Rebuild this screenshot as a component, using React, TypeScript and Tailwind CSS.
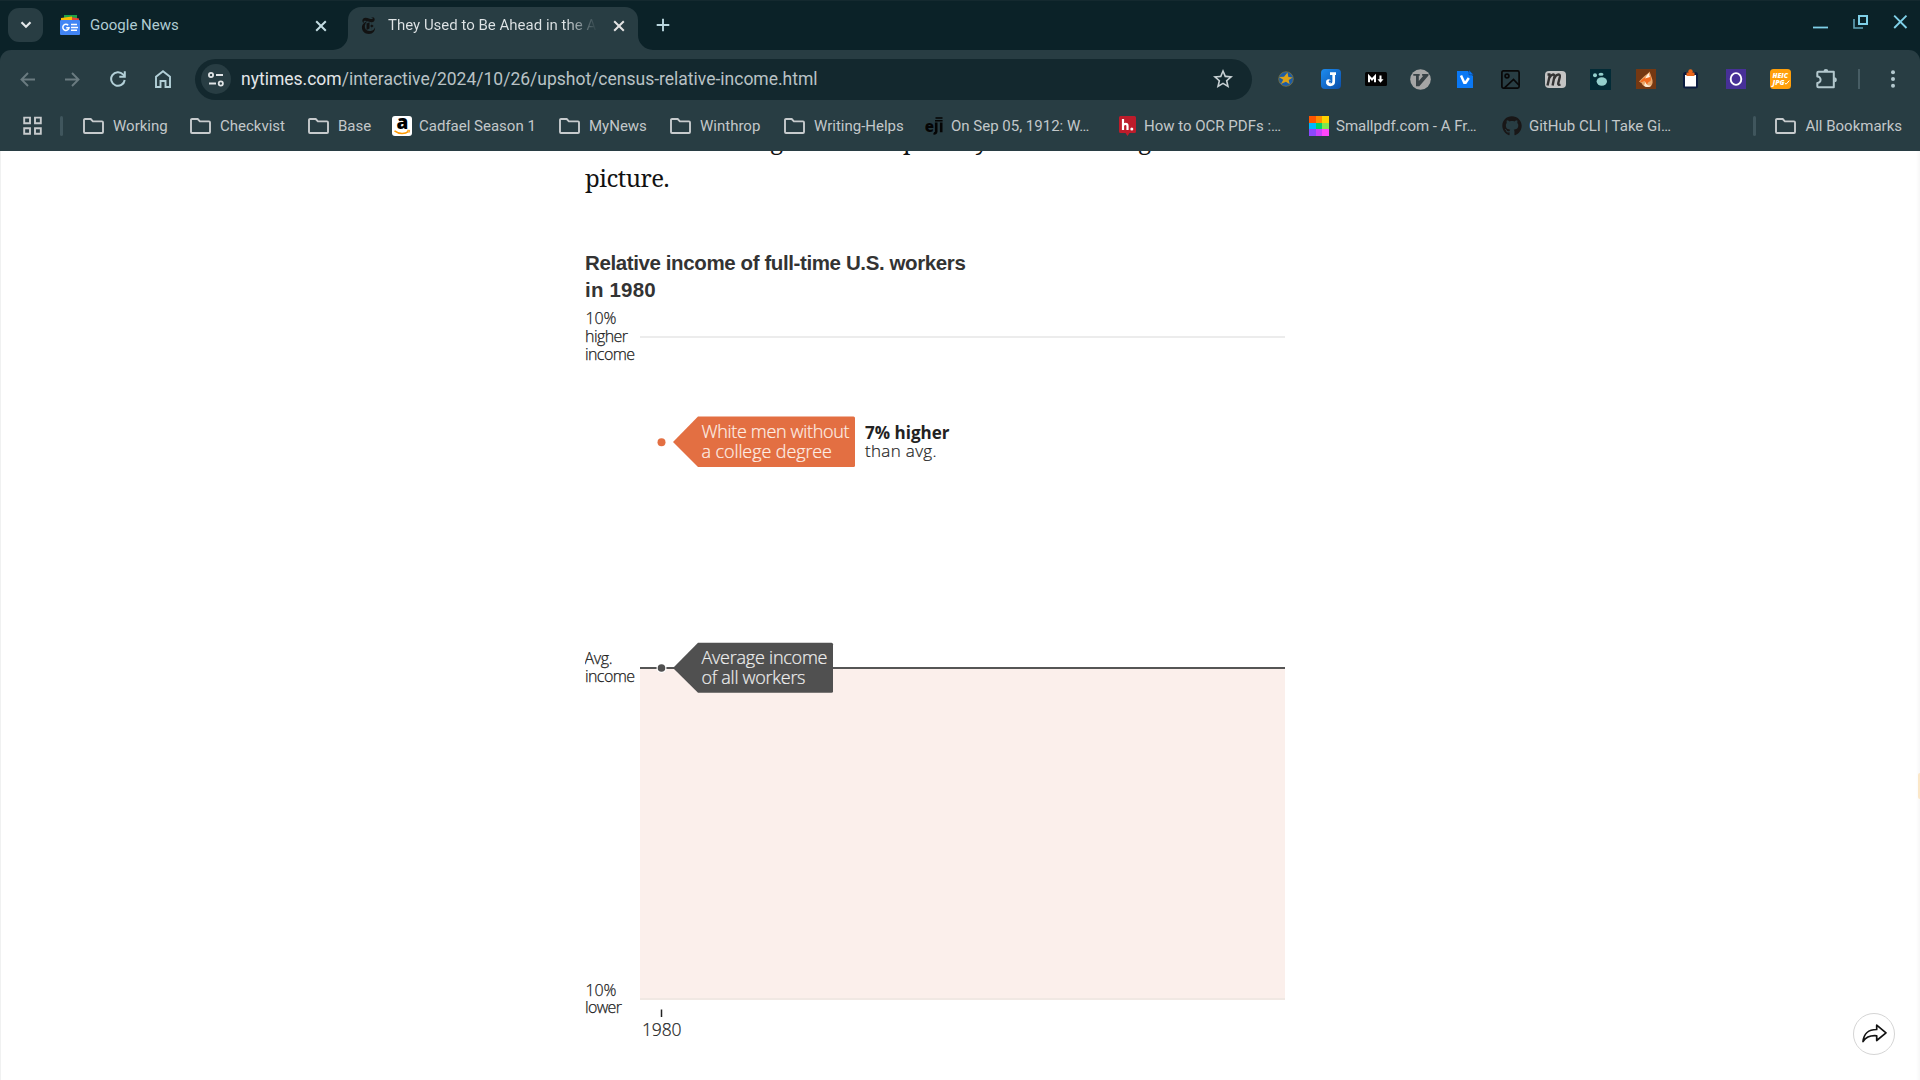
import type { ReactNode } from "react";
import { SiNewyorktimes } from "react-icons/si";
import { FaGithub } from "react-icons/fa";
import { MdStarBorder } from "react-icons/md";

const serif = "font-['Noto_Serif','Liberation_Serif',serif]";

function CloseIcon({ className }: { className: string }) {
  return (
    <svg width="12" height="12" viewBox="0 0 12 12" className={className}>
      <path d="M1.2 1.2l9.6 9.6M10.8 1.2l-9.6 9.6" stroke="currentColor" strokeWidth="2" fill="none" />
    </svg>
  );
}

function FolderIcon() {
  return (
    <svg width="21" height="16" viewBox="0 0 21 16" className="shrink-0">
      <path
        d="M2 1h5.7l2.2 2.4H19a1 1 0 0 1 1 1V14a1 1 0 0 1-1 1H2a1 1 0 0 1-1-1V2a1 1 0 0 1 1-1z"
        fill="none"
        stroke="#c7cbcd"
        strokeWidth="1.9"
      />
    </svg>
  );
}

function GoogleNewsIcon() {
  return (
    <svg width="20" height="20" viewBox="0 0 20 20" className="shrink-0">
      <rect x="4" y="0" width="13" height="6" fill="#1ea446" />
      <path d="M12 2.2l7 1.2V6h-8z" fill="#ea4335" />
      <path d="M1 3l11-1.5V6H1z" fill="#fbbc04" />
      <rect x="0" y="5" width="20" height="15" rx="1" fill="#4285f4" />
      <path d="M8.2 10.2a3.1 3.1 0 1 0 .8 2.5H6.2" fill="none" stroke="#fff" strokeWidth="1.5" />
      <path d="M11 9.6h6M11 12.4h7M11 15.2h6" stroke="#fff" strokeWidth="1.5" />
    </svg>
  );
}

function AmazonIcon() {
  return (
    <span className="relative block h-5 w-5 shrink-0 overflow-hidden rounded-[3px] bg-white">
      <svg width="20" height="20" viewBox="0 0 20 20">
        <text x="4.5" y="13" fontFamily="Open Sans" fontWeight="800" fontSize="19" fill="#000">
          a
        </text>
        <path d="M2.500 14.800c4.500 3.400 10.500 3.400 14 .6" fill="none" stroke="#f90" strokeWidth="1.500" />
        <path d="M15.200 14.300h2.400l-.6 2.400" fill="none" stroke="#f90" strokeWidth="1" />
      </svg>
    </span>
  );
}

function EjiIcon() {
  return (
    <svg width="18" height="20" viewBox="0 0 18 20" className="shrink-0">
      <text x="-0.3" y="15.6" fontFamily="Open Sans" fontWeight="800" fontSize="15" fill="#050505" textLength="9">
        e
      </text>
      <path d="M11.2 6.5v9.2a1.8 1.8 0 0 1-2.6 1.5M16.2 6.5v9.8" fill="none" stroke="#050505" strokeWidth="2.6" />
      <path d="M10 4.8h7.6M10.5 2h7" stroke="#050505" strokeWidth="1.4" />
    </svg>
  );
}

function HypothesisIcon() {
  return (
    <svg width="18" height="20" viewBox="0 0 18 20" className="shrink-0">
      <path
        d="M1.500 0h14A1.500 1.500 0 0 1 17 1.500v14a1.500 1.500 0 0 1-1.500 1.500h-5L8.500 20l-2-3h-5A1.500 1.500 0 0 1 0 15.500v-14A1.500 1.500 0 0 1 1.500 0z"
        fill="#bd1c2b"
      />
      <path d="M4 3v11M4 9.500c1-2 4.500-2.500 4.500.5v4" fill="none" stroke="#fff" strokeWidth="2.200" />
      <circle cx="12.800" cy="13" r="1.500" fill="#fff" />
    </svg>
  );
}

function SmallpdfIcon() {
  return (
    <span className="grid h-5 w-5 shrink-0 grid-cols-3 grid-rows-3">
      <i className="bg-[#ff5500]" />
      <i className="bg-[#ff8e00]" />
      <i className="bg-[#ffd200]" />
      <i className="bg-[#00b9ff]" />
      <i className="bg-[#00d267]" />
      <i className="bg-[#81e650]" />
      <i className="bg-[#8b48fe]" />
      <i className="bg-[#ca41fc]" />
      <i className="bg-[#ff46fb]" />
    </span>
  );
}

function TabStrip() {
  return (
    <div className="flex h-[50px] items-start border-t border-[#14292f] bg-[#0b2228]">
      <button className="mt-[7px] ml-2 flex h-[34px] w-[35px] items-center justify-center rounded-[11px] bg-[#283d43]">
        <svg width="12" height="8" viewBox="0 0 12 8">
          <path d="M1.500 1.300L6 5.800l4.500-4.500" fill="none" stroke="#e4e8ea" strokeWidth="2.200" />
        </svg>
      </button>
      <div className="ml-[17px] flex h-[48px] w-[288px] items-center">
        <GoogleNewsIcon />
        <span className="ml-[10px] w-[225px] pb-[1px] text-[#b0ccd3]">Google News</span>
        <CloseIcon className="mt-[2px] text-[#c3dce2]" />
      </div>
      <div className="relative mt-[6px] flex h-[43px] w-[290px] items-center rounded-t-[13px] bg-[#283d43] pb-[7px] pl-[12px]">
        <svg width="15" height="15" viewBox="0 0 15 15" className="absolute bottom-0 -left-[15px]">
          <path d="M15 0v15H0A15 15 0 0 0 15 0z" fill="#283d43" />
        </svg>
        <svg width="15" height="15" viewBox="0 0 15 15" className="absolute -right-[15px] bottom-0">
          <path d="M0 0v15h15A15 15 0 0 1 0 0z" fill="#283d43" />
        </svg>
        <SiNewyorktimes className="mt-[1px] h-[17px] w-[17px] shrink-0 text-[#121212]" />
        <span className="ml-[11px] w-[209px] overflow-hidden bg-linear-to-r from-[#dfe4e6] from-85% to-transparent to-100% bg-clip-text pb-[1px] whitespace-nowrap text-transparent">
          They Used to Be Ahead in the American
        </span>
        <CloseIcon className="mt-[2px] ml-[16px] shrink-0 text-[#e3e3e3]" />
      </div>
      <svg width="14" height="14" viewBox="0 0 14 14" className="mt-[17px] ml-[18px] shrink-0">
        <path d="M7 .7v12.600M.7 7h12.600" stroke="#b9d6de" strokeWidth="1.900" />
      </svg>
      <div className="mt-[13px] ml-auto flex text-[#7fd0e8]">
        <svg width="15" height="15" viewBox="0 0 15 15">
          <path d="M0 13.500h15" stroke="currentColor" strokeWidth="1.800" />
        </svg>
        <svg width="15" height="15" viewBox="0 0 15 15" className="ml-[25px]">
          <path d="M6 2h8v8H6z" fill="none" stroke="currentColor" strokeWidth="2" />
          <path d="M1 5V14h9" fill="none" stroke="currentColor" strokeWidth="1.600" opacity=".75" />
        </svg>
        <svg width="15" height="15" viewBox="0 0 15 15" className="mr-[12px] ml-[25px]">
          <path d="M1.200 1.700l12.300 12.300M13.500 1.700L1.200 14" stroke="currentColor" strokeWidth="1.900" />
        </svg>
      </div>
    </div>
  );
}

function Extensions() {
  const icons: ReactNode[] = [
    <svg key="star" width="16" height="16" viewBox="0 0 16 16">
      <circle cx="8" cy="8" r="7.300" fill="#1c5ca6" stroke="#8b7a35" strokeWidth=".7" />
      <path d="M9.500 1.500l.9 4.600 4.300.3-4 2.600 1 4.200-3.800-2.500-5 2.300 2.300-4.200L1 6l5-.2z" fill="#dca318" />
    </svg>,
    <svg key="joplin" width="20" height="20" viewBox="0 0 20 20">
      <defs>
        <linearGradient id="joplin" x2="1" y2="1">
          <stop stopColor="#1c8cf0" />
          <stop offset="1" stopColor="#0c4ea8" />
        </linearGradient>
      </defs>
      <rect width="20" height="20" rx="4" fill="url(#joplin)" />
      <path d="M9 4.700h6M12.700 4.500v7.800a3.300 3.300 0 0 1-6.500 1" fill="none" stroke="#fff" strokeWidth="2.700" />
      <circle cx="7.600" cy="12.800" r="2.500" fill="#fff" />
      <circle cx="9" cy="12.500" r="1.200" fill="#1465c4" />
    </svg>,
    <svg key="markdown" width="22" height="14" viewBox="0 0 22 14">
      <rect width="22" height="14" rx="1.500" fill="#030303" />
      <path d="M4 10.200V4.300l3 3.200 3-3.200v5.900" fill="none" stroke="#fff" strokeWidth="2" />
      <path d="M15.500 3.500v5" stroke="#fff" strokeWidth="2" />
      <path d="M12.500 7.200h6l-3 3.500z" fill="#fff" />
    </svg>,
    <svg key="vimium" width="21" height="21" viewBox="0 0 21 21">
      <circle cx="10.500" cy="10.500" r="10.300" fill="#a5a5a5" />
      <path d="M3.300 5h6.400v1.700H8.800v5.300l4.500-5.300h-1.200V5h6.400v1.500L9.300 17.300H6V6.700H3.300z" fill="#384246" />
    </svg>,
    <svg key="doc" width="17" height="19" viewBox="0 0 17 19">
      <path d="M0 1h11l5 5v12H0z" fill="#0a78f4" />
      <path d="M12 0l4.500 4.800H12z" fill="#0a78f4" stroke="#123a70" strokeWidth=".5" />
      <path d="M4 5.500l3.300 7.300h1.300l3.200-4.800" fill="none" stroke="#fff" strokeWidth="2.500" />
    </svg>,
    <svg key="image" width="19" height="19" viewBox="0 0 19 19" fill="none" stroke="#080808" strokeWidth="1.700">
      <rect x=".9" y=".9" width="17.200" height="17.200" rx="1.500" />
      <circle cx="6" cy="6" r="1.900" />
      <path d="M3.500 17.800l9-8.300 5.300 5.500" />
    </svg>,
    <svg key="m" width="21" height="17" viewBox="0 0 21 17">
      <rect width="21" height="17" rx="4" fill="#c4c4c4" />
      <path
        d="M2.500 14.500L5 3.500M4.300 7C6 3.200 10 2 9.300 6L7.600 14.500M9.200 7.500C11 3 15.500 2 14.800 6L13.200 12.500q-.3 2 2.300 1M2.500 3.500h3"
        fill="none"
        stroke="#333"
        strokeWidth="2.400"
      />
    </svg>,
    <svg key="paw" width="21" height="21" viewBox="0 0 21 21">
      <rect width="21" height="21" fill="#032b36" />
      <g fill="#93d0cd">
        <ellipse cx="11.800" cy="12.500" rx="5.200" ry="4.200" />
        <ellipse cx="5" cy="6.300" rx="2" ry="2" />
        <ellipse cx="11" cy="5.300" rx="2.500" ry="1.500" />
      </g>
    </svg>,
    <svg key="fox" width="20" height="20" viewBox="0 0 20 20">
      <rect width="20" height="20" fill="#743812" />
      <path d="M13.500 2.500c-1 2-4 3.500-6 5.500l-4.500 4.500 2.500 1.500c1 3 4.500 4.500 7.500 4 3-1 4-3.500 3.500-6.500-.5-2.500-1-3-1.500-5z" fill="#e9a86c" />
      <path d="M10 8c-3 1-4.500 3-6 5 2 1 3-1 4.500-1s.5 4 3 6c-1-4 1-5 3-6 1-2 0-4-.5-6z" fill="#f06a1e" />
      <path d="M9.500 13c1 3 3 4 6 3.500-2 2-6 2-7.500 0z" fill="#fbe8d0" />
      <path d="M12.500 4l1.500 4-5 1.500z" fill="#fff1df" />
    </svg>,
    <svg key="clipboard" width="17" height="20" viewBox="0 0 17 20">
      <rect x="1" y="3" width="15" height="16.500" rx="2.500" fill="#0a1c40" />
      <path d="M3 6h11v11.500H3z" fill="#fff" />
      <path d="M4.500 7V3.500h2.200a2 2 0 0 1 3.600 0h2.200V7z" fill="#e8651a" />
      <circle cx="8.500" cy="2.500" r="2.200" fill="#e8651a" />
    </svg>,
    <svg key="o" width="20" height="20" viewBox="0 0 20 20">
      <rect width="20" height="20" fill="#473097" />
      <ellipse cx="10" cy="10" rx="5.300" ry="5.900" fill="none" stroke="#fff" strokeWidth="1.900" />
    </svg>,
    <svg key="heic" width="21" height="20" viewBox="0 0 21 20" fontFamily="Open Sans" fontWeight="800" fontStyle="italic" fontSize="7.500" fill="#fff">
      <rect width="21" height="20" rx="3.500" fill="#ff9f0a" />
      <text x="2.500" y="9" textLength="15.500" lengthAdjust="spacingAndGlyphs">
        HEIC
      </text>
      <text x="2.500" y="16.300" textLength="12" lengthAdjust="spacingAndGlyphs">
        JPG
      </text>
      <path d="M14.800 14l1.300 1.200 3.200-3.600" fill="none" stroke="#fff" strokeWidth="1" />
    </svg>,
    <svg key="puzzle" width="21" height="21" viewBox="0 0 21 21" className="translate-x-[1px]">
      <path
        d="M2.300 2.800h15.500v15.500H2.300q-1 0-1-1v-3.300a3 3 0 0 0 0-6.600V3.800q0-1 1-1z"
        fill="none"
        stroke="#b3c8ce"
        strokeWidth="2"
        strokeLinejoin="round"
      />
      <path d="M7.500 2.500a2.400 2.400 0 0 1 4.800 0zM18.300 8.200a2.500 2.500 0 0 1 0 5z" fill="#b3c8ce" />
    </svg>,
  ];
  return (
    <div className="ml-[11px] flex">
      {icons.map((icon, i) => (
        <span key={i} className="flex w-[45px] items-center justify-center">
          {icon}
        </span>
      ))}
    </div>
  );
}

function Toolbar() {
  return (
    <div className="flex h-[58px] items-center">
      <div className="ml-[5px] flex items-center">
        <span className="flex w-[45px] justify-center">
          <svg width="15" height="15" viewBox="0 0 15 15" fill="none" stroke="#6a7b80" strokeWidth="1.900">
            <path d="M15 7.500H1.500M8 1L1.500 7.500 8 14" />
          </svg>
        </span>
        <span className="flex w-[45px] justify-center">
          <svg width="15" height="15" viewBox="0 0 15 15" fill="none" stroke="#6a7b80" strokeWidth="1.900">
            <path d="M0 7.500h13.500M7 1l6.500 6.500L7 14" />
          </svg>
        </span>
        <span className="flex w-[45px] justify-center">
          <svg width="16" height="16" viewBox="0 0 16 16" fill="none" stroke="#b3d0d8" strokeWidth="2">
            <path d="M14.700 9A6.800 6.800 0 1 1 13 3.400l1.600 1.700" />
            <path d="M14.800.3v5.500H9.300" />
          </svg>
        </span>
        <span className="flex w-[45px] justify-center">
          <svg width="16" height="18" viewBox="0 0 16 18" fill="none" stroke="#b3d0d8" strokeWidth="1.900">
            <path d="M1 17V6.800L8 1.300l7 5.500V17h-4.500v-6h-5v6z" />
          </svg>
        </span>
      </div>
      <div className="ml-[10px] flex h-[41px] w-[1057px] items-center rounded-full bg-[#13282e] pr-[17px] pl-[6px]">
        <span className="flex h-[30px] w-[30px] items-center justify-center rounded-full bg-[#283d43]">
          <svg width="16" height="15" viewBox="0 0 16 15" fill="none" stroke="#e0e4e6" strokeWidth="1.800">
            <circle cx="3" cy="3" r="2.100" />
            <path d="M8 3h7M1 11.500h7" />
            <circle cx="12.800" cy="11.500" r="2.100" />
          </svg>
        </span>
        <span className="ml-[10px] text-[17.500px] leading-[22px] text-[#b9c2c5]">
          <span className="text-[#e3e6e8]">nytimes.com</span>/interactive/2024/10/26/upshot/census-relative-income.html
        </span>
        <MdStarBorder className="ml-auto h-[24px] w-[24px] text-[#c7d0d3]" />
      </div>
      <Extensions />
      <span className="ml-[10px] h-5 w-[2px] bg-[#475d64]" />
      <svg width="4" height="18" viewBox="0 0 4 18" fill="#b3c8ce" className="ml-[31px]">
        <circle cx="2" cy="2.200" r="2" />
        <circle cx="2" cy="9" r="2" />
        <circle cx="2" cy="15.800" r="2" />
      </svg>
    </div>
  );
}

const folder = <FolderIcon />;
const bookmarks: { label: string; icon: ReactNode; box: string; gap: string }[] = [
  { label: "Working", icon: folder, box: "w-[107px]", gap: "ml-[9px]" },
  { label: "Checkvist", icon: folder, box: "w-[118px]", gap: "ml-[9px]" },
  { label: "Base", icon: folder, box: "w-[84px]", gap: "ml-[9px]" },
  { label: "Cadfael Season 1", icon: <AmazonIcon />, box: "w-[167px]", gap: "ml-[7px]" },
  { label: "MyNews", icon: folder, box: "w-[111px]", gap: "ml-[9px]" },
  { label: "Winthrop", icon: folder, box: "w-[114px]", gap: "ml-[9px]" },
  { label: "Writing-Helps", icon: folder, box: "w-[141px]", gap: "ml-[9px]" },
  { label: "On Sep 05, 1912: W…", icon: <EjiIcon />, box: "w-[194px]", gap: "ml-[8px]" },
  { label: "How to OCR PDFs :…", icon: <HypothesisIcon />, box: "w-[190px]", gap: "ml-[7px]" },
  { label: "Smallpdf.com - A Fr…", icon: <SmallpdfIcon />, box: "w-[193px]", gap: "ml-[7px]" },
  {
    label: "GitHub CLI | Take Gi…",
    icon: <FaGithub className="h-5 w-5 shrink-0 text-[#191717]" />,
    box: "w-[200px]",
    gap: "ml-[7px]",
  },
];

function BookmarksBar() {
  return (
    <div className="flex h-[43px] items-center pb-[7px] text-[#c3c8ca]">
      <svg width="20" height="20" viewBox="0 0 20 20" fill="none" stroke="#c7cbcd" strokeWidth="1.900" className="ml-[23px]">
        <path d="M1.200 1.600h5.800v5.600H1.200zM12 1.600h5.800v5.600H12zM1.200 12.200h5.800v5.600H1.200zM12 12.200h5.800v5.600H12z" />
      </svg>
      <span className="ml-[17px] h-5 w-[3px] rounded bg-[#40565d]" />
      <div className="ml-[20px] flex items-center">
        {bookmarks.map((b) => (
          <span key={b.label} className={`flex shrink-0 items-center whitespace-nowrap ${b.box}`}>
            {b.icon}
            <span className={b.gap}>{b.label}</span>
          </span>
        ))}
      </div>
      <span className="ml-auto h-5 w-[3px] rounded bg-[#40565d]" />
      <span className="mr-[18px] ml-[19px] flex items-center whitespace-nowrap">
        <FolderIcon />
        <span className="ml-[9px]">All Bookmarks</span>
      </span>
    </div>
  );
}

function Chart() {
  return (
    <svg
      width="720"
      height="740"
      viewBox="585 310 720 740"
      fontFamily="'Open Sans', sans-serif"
      fontWeight="300"
      fontSize="16"
      fill="#222"
      className="block"
    >
      <path d="M640 337h645" stroke="#ececec" strokeWidth="2" />
      <rect x="640" y="669" width="645" height="331" fill="#fbefeb" />
      <path d="M640 999h645" stroke="#f0e8e3" strokeWidth="2" />
      <path d="M640 668h645" stroke="#555" strokeWidth="2" />

      <g stroke="#222" strokeWidth=".25">
        <text x="585.500" y="323.700" textLength="31">10%</text>
        <text x="585" y="341.500" textLength="43">higher</text>
        <text x="585" y="359.500" textLength="50">income</text>
        <text x="584.500" y="663.700" textLength="28">Avg.</text>
        <text x="585" y="681.700" textLength="50">income</text>
        <text x="585.500" y="995.700" textLength="31">10%</text>
        <text x="585" y="1012.700" textLength="37">lower</text>
      </g>

      <circle cx="661.500" cy="442.300" r="4" fill="#e36f42" />
      <path d="M673 442l25-25.500h155.500q1.500 0 1.500 1.500v47.500q0 1.500-1.500 1.500H698z" fill="#e36f42" />
      <g fill="#fdeee6" stroke="#fdeee6" strokeWidth=".2" fontSize="18">
        <text x="701.500" y="437.700" textLength="148">White men without</text>
        <text x="701.500" y="457.700" textLength="130.500">a college degree</text>
      </g>
      <text x="865" y="438.500" fontSize="17" fontWeight="700" textLength="84.500" lengthAdjust="spacingAndGlyphs">
        7% higher
      </text>
      <text x="865" y="456.500" fontSize="17" textLength="71.500" stroke="#222" strokeWidth=".2">
        than avg.
      </text>

      <circle cx="661.500" cy="668" r="5" fill="#fff" />
      <circle cx="661.500" cy="668" r="3.800" fill="#505050" />
      <path d="M673 668l25-25.200h133.500q1.500 0 1.500 1.500v47q0 1.500-1.500 1.500H698z" fill="#505050" />
      <g fill="#eee" stroke="#eee" strokeWidth=".2" fontSize="18">
        <text x="701.500" y="663.700" textLength="126">Average income</text>
        <text x="701.500" y="683.700" textLength="104">of all workers</text>
      </g>

      <path d="M661.500 1009.500v7.500" stroke="#222" strokeWidth="1.500" />
      <text x="642" y="1036" fontSize="17.500" textLength="39.500" stroke="#222" strokeWidth=".2">
        1980
      </text>
    </svg>
  );
}

export default function App() {
  return (
    <div className="flex h-[1080px] w-[1920px] flex-col overflow-hidden bg-white font-['Roboto',sans-serif] text-[15px] leading-5">
      <div className="shrink-0 bg-[#0b2228]">
        <TabStrip />
        <div className="rounded-t-[11px] bg-[#283d43]">
          <Toolbar />
          <BookmarksBar />
        </div>
      </div>
      <main className="relative min-h-0 grow overflow-hidden border-l border-[#f0f1f1] bg-white pl-[584px]">
        <div className={`-mt-[30px] w-[760px] text-[24px] leading-[37.500px] whitespace-nowrap text-[#121212] ${serif}`}>
          <p className="flex text-right tracking-[-0.5px]">
            <span className="w-[198px] shrink-0">But looking</span>
            <span className="w-[205px] shrink-0">especially</span>
            <span className="w-[163px] shrink-0">revealing</span>
          </p>
          <p className="tracking-[-0.5px]">picture.</p>
        </div>
        <h2 className="mt-[53px] font-['Liberation_Sans',Arial,sans-serif] text-[20.500px] leading-[27px] font-bold tracking-[-0.39px] text-[#333]">
          Relative income of full-time U.S. workers
          <br />
          <span className="tracking-[0.2px]">in 1980</span>
        </h2>
        <div className="mt-[7px]">
          <Chart />
        </div>
        <button className="absolute right-[25px] bottom-[25px] flex h-[42px] w-[42px] items-center justify-center rounded-full border border-[#d5d5d5] bg-white">
          <svg width="25" height="19" viewBox="0 0 25 19" fill="none" stroke="#121212" strokeWidth="1.700" strokeLinejoin="round" className="-mt-[1px]">
            <path d="M1 17.500C2 9 6 5.500 14.700 5.500V1.200L24 8.800l-9.300 7.700v-4.700C9 11.300 4.500 12.300 1 17.500z" />
          </svg>
        </button>
        <span className="absolute top-0 right-0 h-full w-[4px] bg-linear-to-r from-white to-[#f7f7f7]" />
        <span className="absolute top-[622px] right-0 h-[26px] w-[2px] rounded-l bg-[#fbe7c8]" />
      </main>
    </div>
  );
}
